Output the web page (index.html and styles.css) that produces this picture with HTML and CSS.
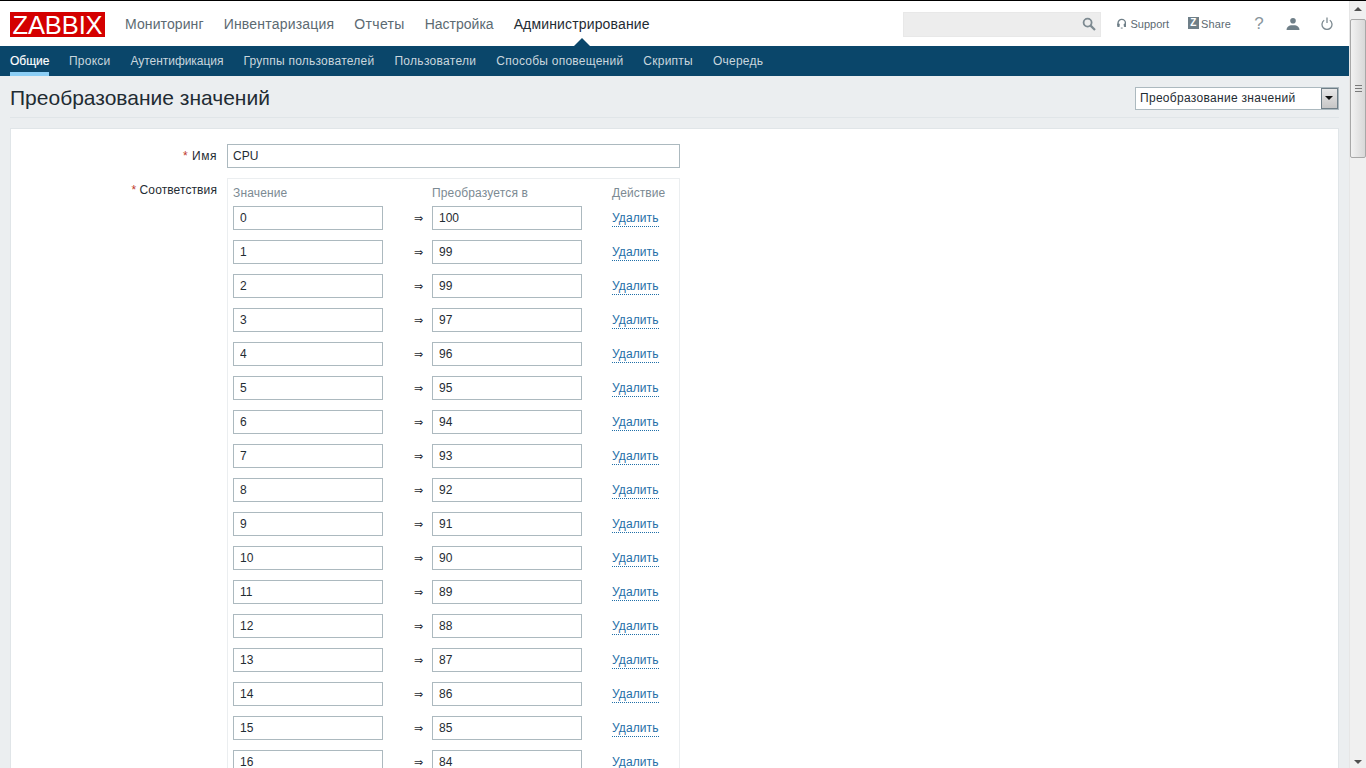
FILE: index.html
```html
<!DOCTYPE html>
<html lang="ru">
<head>
<meta charset="utf-8">
<title>Преобразование значений</title>
<link rel="stylesheet" href="styles.css">
</head>
<body>
<div class="app">
  <div class="page">
    <header class="top">
      <a class="logo">ZABBIX</a>
      <nav class="mainnav">
        <a class="first">Мониторинг</a><a>Инвентаризация</a><a class="wide">Отчеты</a><a class="flat">Настройка</a><a class="current">Администрирование</a>
      </nav>
      <div class="tools">
        <div class="search">
          <svg class="search-icon" width="14" height="14" viewBox="0 0 14 14"><circle cx="5.6" cy="5.6" r="4" fill="none" stroke="#7d8a91" stroke-width="1.8"/><path d="M8.600 8.600L13 13" stroke="#7d8a91" stroke-width="2.200"/></svg>
        </div>
        <a class="tool support"><svg width="12" height="13" viewBox="0 0 12 13"><path d="M1.300 8.500V6a4.700 4.700 0 0 1 9.400 0V8.500" fill="none" stroke="#6f7f88" stroke-width="1.700"/><rect x="0.200" y="6.500" width="3.200" height="4.500" rx="1" fill="#6f7f88"/><rect x="8.600" y="6.500" width="3.200" height="4.500" rx="1" fill="#6f7f88"/><path d="M4.800 12.300h2.400" stroke="#6f7f88" stroke-width="1.200"/></svg><span>Support</span></a>
        <a class="tool share"><span class="zbox">Z</span><span>Share</span></a>
        <a class="icon help">?</a>
        <a class="icon"><svg width="14" height="12" viewBox="0 0 14 12"><circle cx="7" cy="2.800" r="2.800" fill="#6f7f88"/><path d="M0.500 12c0-3 2.200-4.500 4.300-4.800h4.400c2.100.3 4.300 1.800 4.300 4.800z" fill="#6f7f88"/></svg></a>
        <a class="icon"><svg width="12" height="13" viewBox="0 0 12 13"><path d="M3.200 3.300a5 5 0 1 0 5.600 0" fill="none" stroke="#7d8a91" stroke-width="1.300"/><path d="M6 .5v5.500" stroke="#7d8a91" stroke-width="1.300"/></svg></a>
      </div>
    </header>
    <nav class="subnav">
      <a class="active">Общие</a><a>Прокси</a><a class="tight">Аутентификация</a><a>Группы пользователей</a><a class="wide">Пользователи</a><a>Способы оповещений</a><a>Скрипты</a><a>Очередь</a>
    </nav>
    <main class="content">
      <div class="title-row">
        <h1>Преобразование значений</h1>
        <div class="select"><span class="select-text">Преобразование значений</span><span class="select-btn"></span></div>
      </div>
      <section class="card">
        <div class="form-row name-row">
          <label class="label"><span class="req">*</span> Имя</label>
          <input class="field name" value="CPU">
        </div>
        <div class="form-row">
          <label class="label map-label"><span class="req">*</span> Соответствия</label>
          <div class="map">
            <div class="map-row head"><span>Значение</span><span></span><span>Преобразуется в</span><span class="act">Действие</span></div>
            <div class="map-row"><input class="field" value="0"><span class="arrow">⇒</span><input class="field" value="100"><a class="del">Удалить</a></div>
            <div class="map-row"><input class="field" value="1"><span class="arrow">⇒</span><input class="field" value="99"><a class="del">Удалить</a></div>
            <div class="map-row"><input class="field" value="2"><span class="arrow">⇒</span><input class="field" value="99"><a class="del">Удалить</a></div>
            <div class="map-row"><input class="field" value="3"><span class="arrow">⇒</span><input class="field" value="97"><a class="del">Удалить</a></div>
            <div class="map-row"><input class="field" value="4"><span class="arrow">⇒</span><input class="field" value="96"><a class="del">Удалить</a></div>
            <div class="map-row"><input class="field" value="5"><span class="arrow">⇒</span><input class="field" value="95"><a class="del">Удалить</a></div>
            <div class="map-row"><input class="field" value="6"><span class="arrow">⇒</span><input class="field" value="94"><a class="del">Удалить</a></div>
            <div class="map-row"><input class="field" value="7"><span class="arrow">⇒</span><input class="field" value="93"><a class="del">Удалить</a></div>
            <div class="map-row"><input class="field" value="8"><span class="arrow">⇒</span><input class="field" value="92"><a class="del">Удалить</a></div>
            <div class="map-row"><input class="field" value="9"><span class="arrow">⇒</span><input class="field" value="91"><a class="del">Удалить</a></div>
            <div class="map-row"><input class="field" value="10"><span class="arrow">⇒</span><input class="field" value="90"><a class="del">Удалить</a></div>
            <div class="map-row"><input class="field" value="11"><span class="arrow">⇒</span><input class="field" value="89"><a class="del">Удалить</a></div>
            <div class="map-row"><input class="field" value="12"><span class="arrow">⇒</span><input class="field" value="88"><a class="del">Удалить</a></div>
            <div class="map-row"><input class="field" value="13"><span class="arrow">⇒</span><input class="field" value="87"><a class="del">Удалить</a></div>
            <div class="map-row"><input class="field" value="14"><span class="arrow">⇒</span><input class="field" value="86"><a class="del">Удалить</a></div>
            <div class="map-row"><input class="field" value="15"><span class="arrow">⇒</span><input class="field" value="85"><a class="del">Удалить</a></div>
            <div class="map-row"><input class="field" value="16"><span class="arrow">⇒</span><input class="field" value="84"><a class="del">Удалить</a></div>
          </div>
        </div>
      </section>
    </main>
  </div>
  <aside class="scrollbar">
    <span class="sb-up"></span>
    <div class="sb-thumb"><span class="sb-grip"></span></div>
    <span class="sb-down"></span>
  </aside>
</div>
</body>
</html>
```
FILE: styles.css
```css
* { box-sizing: border-box; }
html, body { margin: 0; height: 100%; overflow: hidden; }
body {
  font-family: "Liberation Sans", Arial, sans-serif;
  font-size: 12px;
  color: #1f2c33;
  background: #ebeef0;
  border-top: 1px solid #000;
}
.app { display: flex; height: 767px; }
.page { flex: 1; min-width: 0; overflow: hidden; }

.top {
  display: flex;
  align-items: center;
  height: 45px;
  padding: 0 0 0 10px;
  background: #fff;
}
.logo {
  width: 95px;
  height: 25px;
  margin-top: 1px;
  background: #d40000;
  color: #fff;
  font-size: 25.5px;
  line-height: 26px;
  letter-spacing: -.1px;
  text-align: center;
}
.mainnav { display: flex; gap: 20px; margin-left: 20px; font-size: 14px; letter-spacing: .2px; color: #5c6a72; }
.mainnav .first { letter-spacing: .1px; }
.mainnav .wide { letter-spacing: .33px; }
.mainnav .flat { letter-spacing: 0; }
.mainnav .current { position: relative; color: #1f2c33; letter-spacing: .15px; }
.mainnav .current::after {
  content: "";
  position: absolute;
  left: 60px;
  top: 22px;
  border: 8px solid transparent;
  border-top: 0;
  border-bottom-color: #0a466a;
}
.tools { display: flex; align-items: center; margin-left: auto; height: 100%; color: #5c6a72; }
.search {
  display: flex;
  align-items: center;
  justify-content: flex-end;
  width: 198px;
  height: 25px;
  margin-top: 1px;
  padding-right: 4px;
  background: #ededed;
  border: 1px solid #e8e8e8;
}
.tool { display: flex; align-items: center; font-size: 11px; letter-spacing: .15px; }
.support { margin-left: 16px; gap: 3px; width: 52px; }
.support span { margin-left: 1px; letter-spacing: 0; }
.share { margin-left: 19px; gap: 2px; width: 43px; }
.zbox {
  display: block;
  width: 12px;
  height: 12px;
  margin-top: -2px;
  background: #6f7f88;
  color: #fff;
  font-size: 10px;
  font-weight: bold;
  line-height: 12px;
  text-align: center;
}
.icon { display: flex; justify-content: center; width: 34px; }
.help { margin-left: 11px; font-size: 17px; color: #8a969d; }
.icon:last-child { margin-right: 5px; }

.subnav {
  display: flex;
  gap: 20px;
  height: 30px;
  padding-left: 10px;
  background: #0a466a;
  color: #c9d6de;
  line-height: 31px;
  letter-spacing: .24px;
}
.subnav .tight { letter-spacing: -.05px; }
.subnav .wide { letter-spacing: .3px; }
.subnav .active {
  width: 39px;
  height: 30px;
  border-bottom: 4px solid #8ccef5;
  color: #fff;
  letter-spacing: 0;
  -webkit-text-stroke: .15px #fff;
}

.content { padding: 0 10px; }
.title-row {
  display: flex;
  align-items: center;
  justify-content: space-between;
  height: 42px;
  padding-top: 3px;
  border-bottom: 1px solid #e0e5e8;
}
h1 { margin: 0; font-size: 21px; font-weight: normal; color: #1f2c33; }
.select {
  display: flex;
  align-items: center;
  justify-content: space-between;
  width: 204px;
  height: 23px;
  padding: 0 0 0 4px;
  background: #fff;
  border: 1px solid #acb9bf;
}
.select-text { letter-spacing: .3px; }
.select-btn {
  position: relative;
  width: 17px;
  height: 21px;
  background: linear-gradient(#e8e8e8, #c6c6c6);
  border: 1px solid #6f7f88;
}
.select-btn::after {
  content: "";
  position: absolute;
  left: 3px;
  top: 7px;
  border: 4px solid transparent;
  border-bottom: 0;
  border-top-color: #111;
}

.card {
  margin-top: 10px;
  padding: 15px 0 20px;
  background: #fff;
  border: 1px solid #e0e5e8;
}
.form-row { display: flex; align-items: flex-start; gap: 10px; }
.name-row { align-items: center; margin-bottom: 10px; }
.label { width: 206px; text-align: right; letter-spacing: .1px; }
.name-row .label { letter-spacing: .5px; }
.map-label { margin-top: 5px; }
.req { color: #c0392b; }
.field {
  display: block;
  height: 24px;
  width: 150px;
  padding: 0 6px;
  background: #fff;
  border: 1px solid #acb9bf;
  border-radius: 0;
  outline: 0;
  font: 12px "Liberation Sans", Arial, sans-serif;
  color: #1f2c33;
}
.field.name { width: 453px; padding: 0 5px; }
.map { width: 453px; padding: 7px 5px 0; border: 1px solid #ebeef0; }
.map-row {
  display: grid;
  grid-template-columns: 150px 49px 150px 1fr;
  align-items: center;
  padding-bottom: 10px;
}
.map-row.head { height: 20px; padding-bottom: 6px; color: #7c8a93; line-height: 14px; letter-spacing: .15px; }
.head .act { padding-left: 30px; white-space: nowrap; letter-spacing: .05px; }
.arrow { padding-right: 9px; text-align: right; font-size: 11px; line-height: 24px; }
.del {
  justify-self: start;
  margin: 2px 0 0 30px;
  border-bottom: 1px dotted #1f6fa8;
  color: #1f6fa8;
  line-height: 15px;
  letter-spacing: .1px;
}

.scrollbar {
  position: relative;
  flex: none;
  width: 17px;
  background: #f0f0f0;
  border-left: 1px solid #e6e6e6;
}
.sb-up, .sb-down {
  position: absolute;
  left: 4px;
  border: 4px solid transparent;
}
.sb-up { top: 6px; border-top: 0; border-bottom-color: #505050; }
.sb-down { bottom: 4px; border-bottom: 0; border-top-color: #505050; }
.sb-thumb {
  position: absolute;
  left: 0;
  top: 18px;
  display: flex;
  align-items: center;
  justify-content: center;
  width: 16px;
  height: 139px;
  background: linear-gradient(90deg, #f2f2f2, #d8d8d8);
  border: 1px solid #a8a8a8;
  border-radius: 2px;
}
.sb-grip {
  width: 7px;
  height: 7px;
  border-top: 1px solid #7a7a7a;
  border-bottom: 1px solid #7a7a7a;
  background: linear-gradient(#7a7a7a, #7a7a7a) center / 100% 1px no-repeat;
}
```
